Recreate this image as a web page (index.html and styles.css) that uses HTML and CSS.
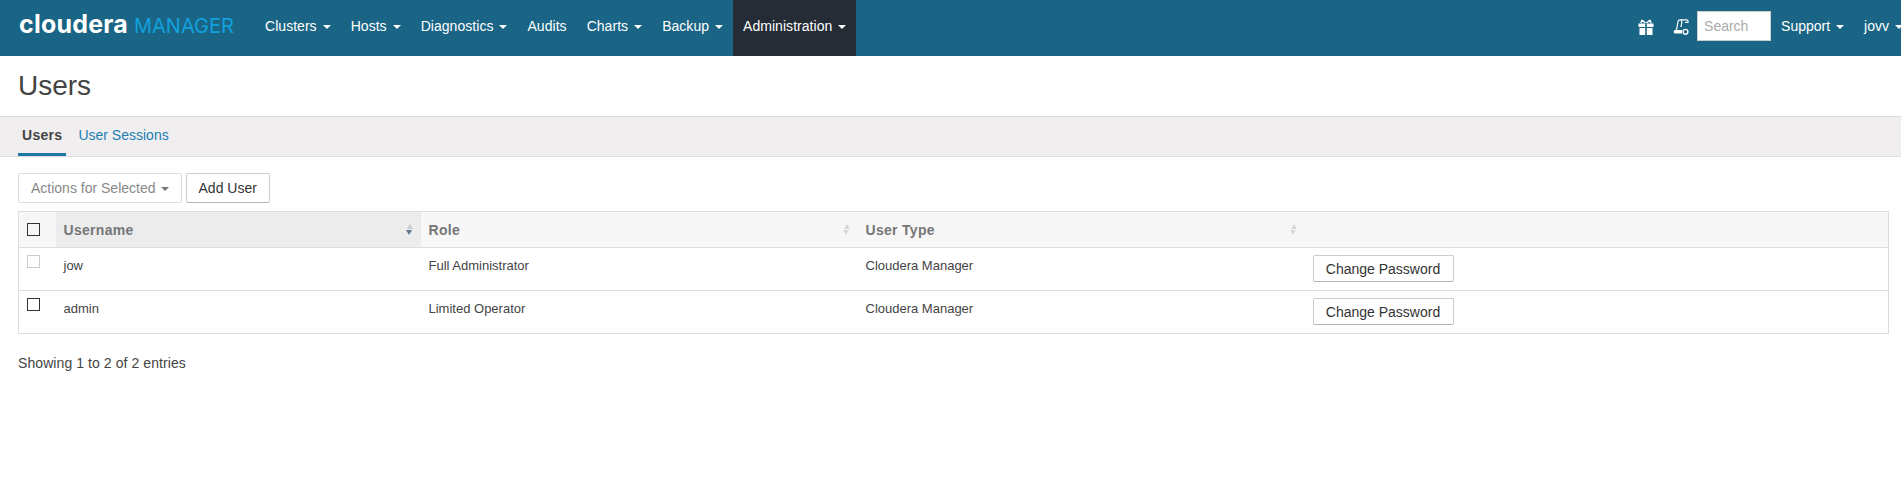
FILE: index.html
```html
<!DOCTYPE html>
<html lang="en">
<head>
    <meta charset="UTF-8">
    <title>Users</title>
    <link rel="stylesheet" href="styles.css">
</head>
<body>

    <nav class="navbar">
        <a class="brand"><span class="brand-name">cloudera</span> <span class="brand-product">MANAGER</span></a>
        <ul class="nav-list">
            <li><a>Clusters<span class="caret"></span></a></li>
            <li><a>Hosts<span class="caret"></span></a></li>
            <li><a>Diagnostics<span class="caret"></span></a></li>
            <li><a>Audits</a></li>
            <li><a>Charts<span class="caret"></span></a></li>
            <li><a>Backup<span class="caret"></span></a></li>
            <li class="active"><a>Administration<span class="caret"></span></a></li>
        </ul>
        <div class="nav-right">
            <svg class="nav-icon gift" width="16" height="16" viewBox="0 0 16 16">
                <path d="M4 1 7.5 4M12 1 8.5 4M4 1 3 4M12 1 13 4" fill="none" stroke="#fff" stroke-width="1.5"/>
                <path d="M.5 4.5h6.7V8H.5zM8.8 4.5h6.700V8H8.8zM1.5 9h5.700v7H1.5zM8.8 9h5.700v7H8.8z" fill="#fff"/>
            </svg>
            <svg class="nav-icon notes" width="16" height="16" viewBox="0 0 16 16">
                <path d="M3.5 11 5 2.5C5.2 1.3 6 .8 7 .8h6.5c1.200 0 1.800 1 1.500 2.500h-3M7 .8c1.300 0 2 1 1.800 2.300L8 8" fill="none" stroke="#fff" stroke-width="1.2"/>
                <path d="M2 11h7v3.500H2C.3 14.500.3 11 2 11z" fill="#fff"/>
                <circle cx="12.5" cy="12.8" r="2.4" fill="#1a6585" stroke="#fff" stroke-width="1.4"/>
            </svg>
            <input class="nav-search" type="text" placeholder="Search">
            <a class="nav-link">Support<span class="caret"></span></a>
            <a class="nav-link">jovv<span class="caret"></span></a>
        </div>
    </nav>

    <h1 class="page-title">Users</h1>

    <div class="tabs">
        <a class="tab active">Users</a>
        <a class="tab">User Sessions</a>
    </div>

    <div class="toolbar">
        <button class="btn btn-disabled">Actions for Selected<span class="caret"></span></button>
        <button class="btn">Add User</button>
    </div>

    <table class="users-table">
        <thead>
            <tr>
                <th class="col-check"><span class="check"></span></th>
                <th class="col-user sorted">Username<span class="sort"></span></th>
                <th class="col-role">Role<span class="sort"></span></th>
                <th class="col-type">User Type<span class="sort"></span></th>
                <th></th>
            </tr>
        </thead>
        <tbody>
            <tr>
                <td class="col-check"><span class="check check-disabled"></span></td>
                <td>jow</td>
                <td>Full Administrator</td>
                <td>Cloudera Manager</td>
                <td><button class="btn btn-small">Change Password</button></td>
            </tr>
            <tr>
                <td class="col-check"><span class="check"></span></td>
                <td>admin</td>
                <td>Limited Operator</td>
                <td>Cloudera Manager</td>
                <td><button class="btn btn-small">Change Password</button></td>
            </tr>
        </tbody>
    </table>

    <p class="table-info">Showing 1 to 2 of 2 entries</p>

</body>
</html>
```

FILE: styles.css
```css
body {
    font-family: "Liberation Sans", Arial, sans-serif;
    font-size: 14px;
    color: #333;
    background-color: #fff;
    margin: 0;
    padding: 0;
    overflow-x: hidden;
}

/* top bar */
.navbar {
    display: flex;
    align-items: center;
    height: 56px;
    background-color: #1a6585;
    color: #fff;
    white-space: nowrap;
}
.brand {
    display: flex;
    align-items: baseline;
    width: 255px;
    padding-left: 19px;
    padding-bottom: 9px;
    box-sizing: border-box;
    gap: 6px;
}
.brand-name {
    font-family: Inter, sans-serif;
    font-size: 25px;
    font-weight: 700;
    letter-spacing: 0.2px;
}
.brand-product {
    font-family: Inter, sans-serif;
    font-size: 20px;
    font-weight: 400;
    color: #11a1dd;
}
.nav-list {
    display: flex;
    list-style: none;
    margin: 0;
    padding: 0;
    height: 56px;
    letter-spacing: 0.04px;
}
.nav-list a {
    display: block;
    padding: 0 10px;
    line-height: 52px;
    height: 56px;
}
.nav-list .active {
    background-color: #252c36;
}
.caret {
    display: inline-block;
    margin-left: 6px;
    vertical-align: middle;
    border-top: 4px solid #fff;
    border-left: 4px solid transparent;
    border-right: 4px solid transparent;
}
.nav-right {
    display: flex;
    align-items: center;
    margin-left: auto;
    margin-right: -12px;
}
.nav-icon {
    margin-top: -3px;
}
.gift {
    margin-right: 19px;
}
.notes {
    margin-right: 8px;
}
.nav-search {
    width: 74px;
    height: 30px;
    box-sizing: border-box;
    margin-top: -4px;
    padding: 0 6px;
    border: 1px solid #ccc;
    font-family: inherit;
    font-size: 14px;
}
.nav-search::placeholder {
    color: #aaa;
}
.nav-link {
    padding: 0 10px;
    margin-top: -4px;
    line-height: 52px;
}

/* heading and tabs */
.page-title {
    margin: 0;
    padding: 0 18px;
    height: 60px;
    line-height: 60px;
    font-size: 28px;
    font-weight: 400;
    color: #444;
}
.tabs {
    display: flex;
    height: 39px;
    padding-left: 18px;
    background-color: #f0eeef;
    border-top: 1px solid #ddd;
    border-bottom: 1px solid #ddd;
}
.tab {
    padding: 0 4px;
    margin-right: 8px;
    line-height: 36px;
    color: #1b7fb2;
}
.tab.active {
    color: #444;
    font-weight: 700;
    letter-spacing: 0.3px;
    border-bottom: 3px solid #1c769f;
    height: 39px;
    box-sizing: border-box;
}

/* toolbar */
.toolbar {
    display: flex;
    gap: 4px;
    padding: 16px 18px 8px;
}
.btn {
    height: 30px;
    padding: 0 12px;
    font-family: inherit;
    font-size: 14px;
    color: #333;
    background-color: #fff;
    border: 1px solid #ccc;
    border-bottom-color: #b3b3b3;
    border-radius: 2px;
}
.btn .caret {
    margin-left: 5px;
    border-top-color: #777;
}
.btn-disabled {
    color: #888;
    border-color: #ddd;
}
.btn-small {
    display: block;
    height: 27px;
    width: 141px;
    margin-top: -3px;
    padding: 0;
}

/* users table */
.users-table {
    width: calc(100% - 30px);
    margin: 0 12px 0 18px;
    border-collapse: collapse;
    table-layout: fixed;
    border: 1px solid #ddd;
    font-size: 13px;
    color: #444;
}
.users-table th {
    position: relative;
    height: 35px;
    padding: 0 8px;
    text-align: left;
    font-size: 14px;
    letter-spacing: 0.3px;
    color: #767676;
    background-color: #f7f7f7;
    border-bottom: 1px solid #ddd;
}
.users-table th.sorted {
    background-color: #ececec;
}
.users-table td {
    height: 43px;
    padding: 10px 8px 8px;
    box-sizing: border-box;
    vertical-align: top;
    border-bottom: 1px solid #ddd;
}
.col-check {
    width: 37px;
    box-sizing: border-box;
}
.col-user {
    width: 365px;
    box-sizing: border-box;
}
.col-role {
    width: 437px;
    box-sizing: border-box;
}
.col-type {
    width: 447px;
    box-sizing: border-box;
}
.check {
    display: block;
    box-sizing: border-box;
    width: 13px;
    height: 13px;
    border: 1px solid #333;
}
td .check {
    margin-top: -3px;
}
.check-disabled {
    border-color: #ccc;
}
.sort {
    position: absolute;
    right: 8px;
    top: 12px;
    width: 0;
    height: 0;
    border-left: 3.5px solid transparent;
    border-right: 3.5px solid transparent;
    border-bottom: 5px solid #d8d8d8;
}
.sort::after {
    content: "";
    position: absolute;
    left: -3.5px;
    top: 6px;
    border-left: 3.5px solid transparent;
    border-right: 3.5px solid transparent;
    border-top: 5px solid #d8d8d8;
}
.sorted .sort {
    border-bottom-color: #c5ccd3;
}
.sorted .sort::after {
    border-top-color: #5d7690;
}
.table-info {
    margin: 21px 18px 0;
    letter-spacing: 0.08px;
    color: #444;
}
```
